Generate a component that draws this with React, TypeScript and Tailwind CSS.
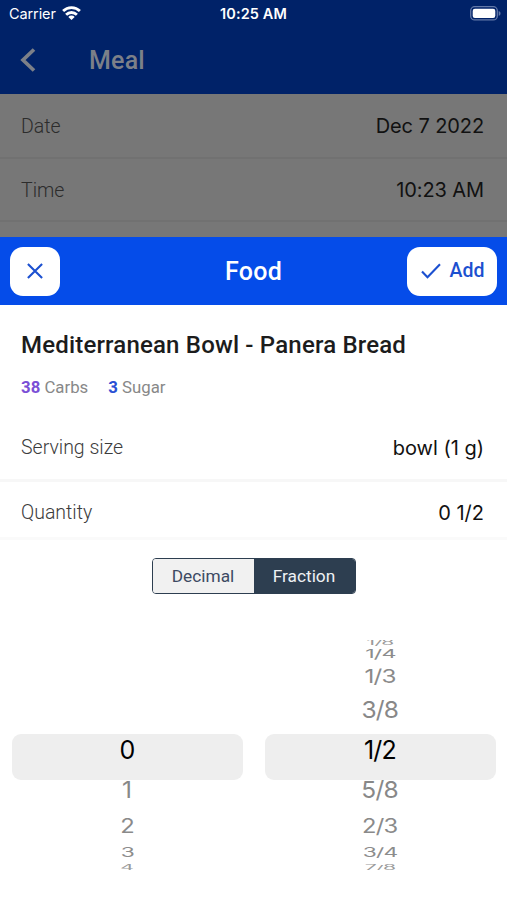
type WheelItem = { label: string; row: string; text: string };

const rowStyles = {
  top4: { row: 'h-[4px]', text: 'translate-y-[0.5px] scale-x-[0.84] scale-y-[0.28] text-[#9a9a9a]' },
  top3: { row: 'h-[20px]', text: '-translate-y-[0.5px] scale-x-[0.93] scale-y-[0.49] text-[#8c8c8c]' },
  top2: { row: 'h-[26px]', text: '-translate-y-[0.5px] scale-x-[0.97] scale-y-[0.76] text-[#8a8a8a]' },
  top1: { row: 'h-[40px]', text: 'scale-x-[0.98] scale-y-[0.94] text-[#888888]' },
  mid: { row: 'h-[40px]', text: '-translate-y-[0.5px] text-black' },
  low1: { row: 'h-[40px]', text: 'scale-x-[0.98] scale-y-[0.94] text-[#888888]' },
  low2: { row: 'h-[32px]', text: '-translate-y-[0.5px] scale-x-[0.95] scale-y-[0.79] text-[#8a8a8a]' },
  low3: { row: 'h-[22px]', text: '-translate-y-[0.5px] scale-x-[0.91] scale-y-[0.5] text-[#8c8c8c]' },
  low4: { row: 'h-[6px]', text: 'translate-y-[0.5px] scale-x-[0.85] scale-y-[0.28] text-[#9a9a9a]' },
};

const item = (label: string, style: { row: string; text: string }): WheelItem => ({ label, ...style });

const wholes: WheelItem[] = [
  item('', rowStyles.top4),
  item('', rowStyles.top3),
  item('', rowStyles.top2),
  item('', rowStyles.top1),
  item('0', rowStyles.mid),
  item('1', rowStyles.low1),
  item('2', rowStyles.low2),
  item('3', rowStyles.low3),
  item('4', rowStyles.low4),
];

const fractions: WheelItem[] = [
  item('1/8', rowStyles.top4),
  item('1/4', rowStyles.top3),
  item('1/3', rowStyles.top2),
  item('3/8', rowStyles.top1),
  item('1/2', rowStyles.mid),
  item('5/8', rowStyles.low1),
  item('2/3', rowStyles.low2),
  item('3/4', rowStyles.low3),
  item('7/8', rowStyles.low4),
];

function Wheel({ items }: { items: WheelItem[] }) {
  return (
    <div className="relative h-[230px] w-[231px] overflow-hidden font-['Inter',sans-serif]">
      <div className="absolute inset-x-0 top-[94px] h-[46px] rounded-[9px] bg-[#eeeeee]" />
      <div className="relative flex flex-col pr-px">
        {items.map((it, i) => (
          <div key={i} className={`flex shrink-0 items-center justify-center ${it.row}`}>
            <span className={`text-[25px] leading-none tracking-[-0.8px] ${it.text}`}>{it.label}</span>
          </div>
        ))}
      </div>
    </div>
  );
}

function StatusBar() {
  return (
    <div className="grid h-7 grid-cols-3 items-center pl-[9px] pr-[6px] font-['Inter',sans-serif] text-white">
      <div className="flex items-center gap-[6px]">
        <span className="text-[14.5px] leading-none tracking-[-0.1px]">Carrier</span>
        <svg className="-mt-[2px]" width="19" height="14" viewBox="0 0 19 14" fill="none" stroke="white" strokeWidth="2.8">
          <path d="M1.1 5.1a11.9 11.9 0 0 1 16.8 0" />
          <path d="M4.1 8.7a7.7 7.7 0 0 1 10.8 0" />
          <path d="M9.5 14 6.3 10.9a4.4 4.4 0 0 1 6.4 0z" fill="white" stroke="none" />
        </svg>
      </div>
      <span className="-ml-[3px] text-center text-[14.5px] font-semibold leading-none tracking-[0.1px]">10:25 AM</span>
      <svg className="-mt-[2px] justify-self-end" width="31" height="15" viewBox="0 0 31 15">
        <rect x="0.7" y="0.7" width="26.6" height="13.2" rx="4" fill="none" stroke="#6379a8" strokeWidth="1.3" />
        <rect x="2.7" y="2.7" width="22.6" height="9.2" rx="2.2" fill="white" />
        <path d="M28.7 5v4.8c1.2-.4 1.8-1.3 1.8-2.4s-.6-2-1.8-2.4z" fill="#6379a8" />
      </svg>
    </div>
  );
}

function DimmedRow({ label, value, size }: { label: string; value: string; size: string }) {
  return (
    <div className={`flex items-center justify-between border-b-2 border-[#717171] pl-[21px] pr-[23px] pt-px ${size}`}>
      <span className="pt-px text-[19.5px] font-light text-[#2c2c2c]">{label}</span>
      <span className="font-['Inter',sans-serif] text-[20px] tracking-[-0.1px] text-[#111111]">{value}</span>
    </div>
  );
}

export default function App() {
  return (
    <div className="flex h-[900px] w-full flex-col overflow-hidden bg-white font-['Roboto',sans-serif]">
      <div className="flex h-[237px] shrink-0 flex-col overflow-hidden bg-[#777777]">
        <header className="h-[94px] shrink-0 bg-[#002268]">
          <StatusBar />
          <div className="flex h-16 items-center pl-[20px]">
            <svg width="16" height="24" viewBox="0 0 16 24" fill="none" stroke="#7c8088" strokeWidth="3.7">
              <path d="M14 1.5 3 12l11 10.5" />
            </svg>
            <h1 className="ml-[53px] pt-px text-[25px] font-medium tracking-[0.2px] text-[#7c8088]">Meal</h1>
          </div>
        </header>
        <DimmedRow label="Date" value="Dec 7 2022" size="h-[65px]" />
        <DimmedRow label="Time" value="10:23 AM" size="h-[63px]" />
      </div>

      <section className="flex flex-1 flex-col">
        <div className="flex h-[68px] shrink-0 items-center justify-between bg-[#054ce9] px-[10px]">
          <div className="flex w-[91px]">
            <button className="flex h-[49px] w-[50px] items-center justify-center rounded-[13px] bg-white">
              <svg width="16" height="16" viewBox="0 0 16 16" fill="none" stroke="#1c50d0" strokeWidth="2.1">
                <path d="M.9.9l14.2 14.2M15.1.9.9 15.1" />
              </svg>
            </button>
          </div>
          <h2 className="pr-px pt-[2px] text-[25px] font-medium tracking-[0.3px] text-white">Food</h2>
          <button className="flex h-[49px] w-[90px] items-center justify-center gap-[9px] rounded-[13px] bg-white pl-px text-[#1c50d0]">
            <svg width="20" height="16" viewBox="0 0 20 16" fill="none" stroke="currentColor" strokeWidth="2.1">
              <path d="M1 8.5l5.5 5.8L19 1.3" />
            </svg>
            <span className="text-[19.5px] font-medium">Add</span>
          </button>
        </div>

        <div className="px-[21px] pt-[23px]">
          <h3 className="whitespace-nowrap text-[24px] font-medium leading-[34px] tracking-[0.18px] text-[#1c1c1c]">Mediterranean Bowl - Panera Bread</h3>
          <div className="mt-[13px] flex gap-5 text-[16.8px] leading-6 text-[#888888]">
            <span><b className="font-bold text-[#7a4fd6]">38</b> Carbs</span>
            <span><b className="font-bold text-[#2a50d4]">3</b> Sugar</span>
          </div>
        </div>

        <div className="mt-[17px] flex h-[66px] items-center justify-between border-b-[3px] border-[#f7f7f7] pl-[21px] pr-[23px] pt-px">
          <span className="text-[19.5px] font-light text-[#3c3c3c]">Serving size</span>
          <span className="font-['Inter',sans-serif] text-[20px] text-[#111111]">bowl (1 g)</span>
        </div>
        <div className="flex h-[58px] items-center justify-between border-b-[3px] border-[#fafafa] pl-[21px] pr-[23px] pt-[6px]">
          <span className="text-[19.5px] font-light text-[#3c3c3c]">Quantity</span>
          <span className="font-['Inter',sans-serif] text-[20px] text-[#111111]">0 1/2</span>
        </div>

        <div className="mx-auto mt-[18px] flex h-9 w-[204px] overflow-hidden rounded-[4px] border border-[#2d3e50] text-[17.3px]">
          <button className="flex-1 bg-[#f1f1f1] pt-px text-[#3d4a63]">Decimal</button>
          <button className="flex-1 bg-[#2d3e50] pt-px text-[#eef1f4]">Fraction</button>
        </div>

        <div className="mt-[46px] flex justify-between pl-3 pr-[11px]">
          <Wheel items={wholes} />
          <Wheel items={fractions} />
        </div>
      </section>
    </div>
  );
}
